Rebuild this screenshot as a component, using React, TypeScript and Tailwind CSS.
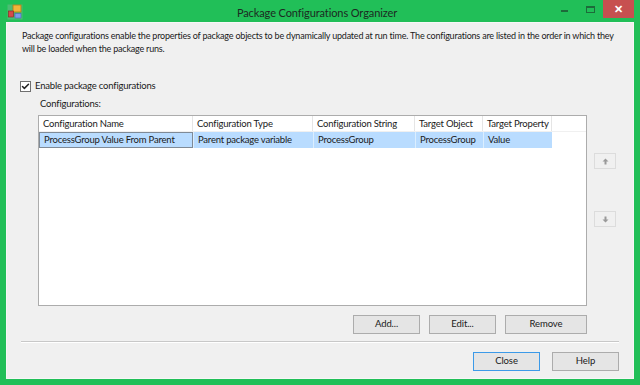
import { Check } from 'lucide-react';

const FONT = { fontFamily: 'Lato, "Liberation Sans", sans-serif' };

const COLUMNS = [
  { title: 'Configuration Name', width: 'w-[154px]' },
  { title: 'Configuration Type', width: 'w-[120px]' },
  { title: 'Configuration String', width: 'w-[102px]' },
  { title: 'Target Object', width: 'w-[68px]' },
  { title: 'Target Property', width: 'w-[69px]' },
];

const ROW = ['ProcessGroup Value From Parent', 'Parent package variable', 'ProcessGroup', 'ProcessGroup', 'Value'];

function AppIcon() {
  return (
    <svg width="16" height="16" viewBox="0 0 16 16">
      <rect x="0.5" y="0.5" width="15" height="15" fill="#9fb8a8" opacity="0.35" />
      <rect x="6" y="1" width="8" height="7" fill="#f2b53a" stroke="#b07d12" strokeWidth="0.8" />
      <rect x="1.5" y="7" width="5" height="6" fill="#d64a4a" stroke="#8a1f1f" strokeWidth="0.6" />
      <rect x="8" y="9.5" width="6" height="4.5" fill="#7e9be8" stroke="#4a64b5" strokeWidth="0.6" />
    </svg>
  );
}

function Btn({ label, className = '', primary = false }: { label: string; className?: string; primary?: boolean }) {
  return (
    <button
      className={`h-[19px] text-[9.5px] tracking-[-0.1px] text-[#1a1a1a] bg-[#e5e5e5] border ${primary ? 'border-[#3c9ae8]' : 'border-[#acacac]'} ${className}`}
    >
      {label}
    </button>
  );
}

function ArrowBtn({ up }: { up: boolean }) {
  return (
    <div className="w-[22px] h-[16px] border border-[#dcdcdc] bg-[#f0f0f0] flex items-center justify-center">
      <svg width="7" height="7" viewBox="0 0 7 7" className={up ? '' : 'rotate-180'}>
        <path d="M3.5 0.5 L6.5 3.5 L4.5 3.5 L4.5 6.5 L2.5 6.5 L2.5 3.5 L0.5 3.5 Z" fill="#9a9a9a" />
      </svg>
    </div>
  );
}

export default function App() {
  return (
    <div className="w-[640px] h-[385px] bg-[#21bf58] flex flex-col overflow-hidden" style={FONT}>
      {/* Title bar */}
      <div className="h-[22px] flex items-center relative shrink-0">
        <div className="pl-[7px] pt-[2px] w-[90px]">
          <AppIcon />
        </div>
        <div className="flex-1 text-center text-[11px] tracking-[-0.1px] text-[#1c2a22] leading-none pt-[2px]">
          Package Configurations Organizer
        </div>
        <div className="flex items-start justify-end h-full mr-[6px] w-[90px]">
          <div className="w-[26px] h-[18px] flex items-center justify-center">
            <div className="w-[7px] h-[2px] bg-[#1d6b3a] mt-[4px]" />
          </div>
          <div className="w-[26px] h-[18px] flex items-center justify-center">
            <div className="w-[9px] h-[7px] border border-[#1d6b3a] border-t-2" />
          </div>
          <div className="w-[31px] h-[18px] bg-[#c75050] flex items-center justify-center text-white text-[11px] font-bold">
            ✕
          </div>
        </div>
      </div>

      {/* Body */}
      <div className="mx-[6px] mb-[6px] flex-1 bg-[#f0f0f0] border border-[#f7f7f7] flex flex-col text-[9.5px] tracking-[-0.2px] text-[#1a1a1a]">
        <p className="pl-[15px] pr-[6px] pt-[6px] leading-[13px] text-[9px] tracking-[-0.2px]">
          Package configurations enable the properties of package objects to be dynamically updated at run time. The configurations are listed in the order in which they
          <br />
          will be loaded when the package runs.
        </p>

        <label className="flex items-center gap-[4px] ml-[13px] mt-[24px] h-[14px]">
          <span className="w-[11px] h-[11px] border border-[#707070] bg-white flex items-center justify-center">
            <Check className="w-[9px] h-[9px] text-[#222]" strokeWidth={4} />
          </span>
          Enable package configurations
        </label>

        <div className="ml-[33px] mt-[4px] leading-[14px]">Configurations:</div>

        <div className="flex mt-[4px] ml-[31px]">
          {/* Grid */}
          <div className="w-[549px] h-[191px] bg-white border border-[#acacac] flex flex-col">
            <div className="flex h-[16px] border-b border-[#f0f0f0]">
              {COLUMNS.map((c) => (
                <div key={c.title} className={`${c.width} border-r border-[#e5e5e5] px-[4px] leading-[15px] whitespace-nowrap overflow-hidden`}>
                  {c.title}
                </div>
              ))}
            </div>
            <div className="flex h-[16px]">
              {ROW.map((v, i) => (
                <div
                  key={i}
                  className={`${COLUMNS[i].width} bg-[#b9dcff] whitespace-nowrap overflow-hidden leading-[14px] ${
                    i === 0 ? 'border border-[#7f8a96] px-[4px]' : 'border-l border-[#dbeeff] px-[4px] pt-px'
                  }`}
                >
                  {v}
                </div>
              ))}
            </div>
          </div>

          {/* Move buttons */}
          <div className="ml-[7px] flex flex-col pt-[38px] gap-[42px]">
            <ArrowBtn up />
            <ArrowBtn up={false} />
          </div>
        </div>

        <div className="flex justify-end gap-[9px] mt-[9px] mr-[46px]">
          <Btn label="Add..." className="w-[67px]" />
          <Btn label="Edit..." className="w-[67px]" />
          <Btn label="Remove" className="w-[82px]" />
        </div>

        <div className="mx-[14px] mt-[7px] h-[2px] border-t border-[#c8c8c8] border-b border-b-white" />

        <div className="flex justify-end gap-[12px] mt-[9px] mr-[14px]">
          <Btn label="Close" className="w-[67px]" primary />
          <Btn label="Help" className="w-[67px]" />
        </div>
      </div>
    </div>
  );
}
